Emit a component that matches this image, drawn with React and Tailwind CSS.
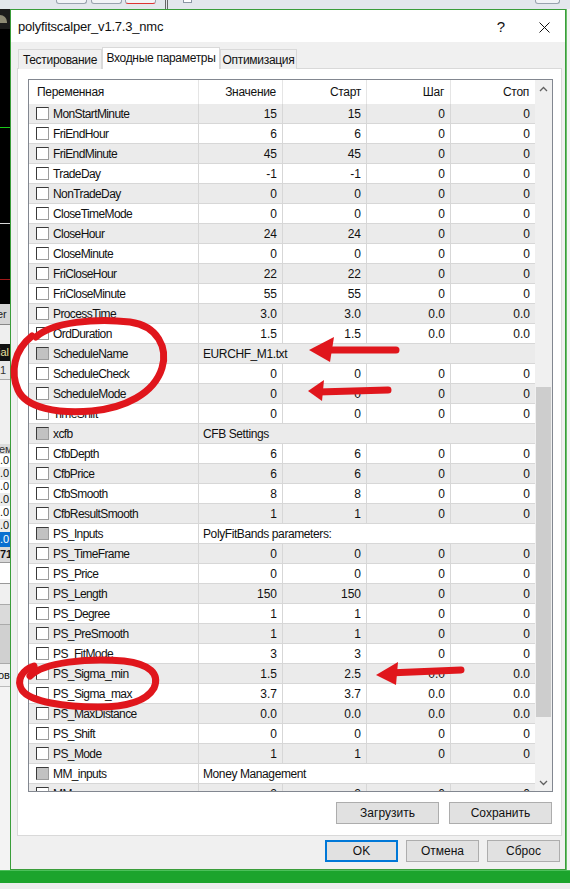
import React from "react";

const rows = [
	["MonStartMinute", "15", "15", "0", "0"],
	["FriEndHour", "6", "6", "0", "0"],
	["FriEndMinute", "45", "45", "0", "0"],
	["TradeDay", "-1", "-1", "0", "0"],
	["NonTradeDay", "0", "0", "0", "0"],
	["CloseTimeMode", "0", "0", "0", "0"],
	["CloseHour", "24", "24", "0", "0"],
	["CloseMinute", "0", "0", "0", "0"],
	["FriCloseHour", "22", "22", "0", "0"],
	["FriCloseMinute", "55", "55", "0", "0"],
	["ProcessTime", "3.0", "3.0", "0.0", "0.0"],
	["OrdDuration", "1.5", "1.5", "0.0", "0.0"],
	["ScheduleName", "EURCHF_M1.txt"],
	["ScheduleCheck", "0", "0", "0", "0"],
	["ScheduleMode", "0", "0", "0", "0"],
	["TimeShift", "0", "0", "0", "0"],
	["xcfb", "CFB Settings"],
	["CfbDepth", "6", "6", "0", "0"],
	["CfbPrice", "6", "6", "0", "0"],
	["CfbSmooth", "8", "8", "0", "0"],
	["CfbResultSmooth", "1", "1", "0", "0"],
	["PS_Inputs", "PolyFitBands parameters:"],
	["PS_TimeFrame", "0", "0", "0", "0"],
	["PS_Price", "0", "0", "0", "0"],
	["PS_Length", "150", "150", "0", "0"],
	["PS_Degree", "1", "1", "0", "0"],
	["PS_PreSmooth", "1", "1", "0", "0"],
	["PS_FitMode", "3", "3", "0", "0"],
	["PS_Sigma_min", "1.5", "2.5", "0.0", "0.0"],
	["PS_Sigma_max", "3.7", "3.7", "0.0", "0.0"],
	["PS_MaxDistance", "0.0", "0.0", "0.0", "0.0"],
	["PS_Shift", "0", "0", "0", "0"],
	["PS_Mode", "1", "1", "0", "0"],
	["MM_inputs", "Money Management"],
	["MM", "2", "2", "0", "0"],
];

const Check = ({ filled }) => (
	<span
		className={`block w-[13px] h-[13px] shrink-0 border border-t-[#3a3a3a] border-l-[#3a3a3a] border-r-[#9c9c9c] border-b-[#9c9c9c] ${filled ? "bg-[#c2c2c2]" : "bg-white"}`}
	/>
);

const Row = ({ r, i }) => {
	const bg = i % 2 === 0 ? "bg-[#ebebeb]" : "bg-white";
	const str = r.length === 2;
	return (
		<div className={`grid grid-cols-[170px_84px_84px_84px_84px] h-[20px] shrink-0 border-b border-[#d7d7d7] ${bg}`}>
			<div className="flex items-center pl-[7px] border-r border-[#d7d7d7]">
				<Check filled={str} />
				<span className="ml-[4px] tracking-[-0.6px] whitespace-nowrap">{r[0]}</span>
			</div>
			{str ? (
				<div className="col-span-4 flex items-center pl-[4px] tracking-[-0.4px] whitespace-nowrap">{r[1]}</div>
			) : (
				r.slice(1).map((v, k) => (
					<div
						key={k}
						className={`flex items-center justify-end pr-[5px] ${k < 3 ? "border-r border-[#d7d7d7]" : ""}`}
					>
						{v}
					</div>
				))
			)}
		</div>
	);
};

const Chevron = ({ down }) => (
	<svg width="9" height="6" viewBox="0 0 9 6">
		<polyline
			points={down ? "1,1 4.5,4.5 8,1" : "1,5 4.5,1.5 8,5"}
			fill="none"
			stroke="#606060"
			strokeWidth="1.3"
		/>
	</svg>
);

const Btn = ({ children, primary }) => (
	<div
		className={`h-[22px] flex items-center justify-center bg-[#e1e1e1] ${primary ? "w-[73px] border-2 border-[#0078d7]" : "border border-[#adadad]"}`}
	>
		{children}
	</div>
);

function LeftStrip() {
	return (
		<div className="w-[10px] flex flex-col overflow-hidden text-[11px] leading-none">
			<div className="h-[20px] bg-[#1c1c1c] flex items-center">
				<div className="w-[7px] h-[8px] bg-[#8d8a74] rounded-tr-full" />
			</div>
			<div className="h-[275px] bg-black flex flex-col">
				<div className="h-[98px]" />
				<div className="h-[1px] bg-[#19c819]" />
				<div className="h-[95px]" />
				<div className="h-[1px] bg-[#d8d8d8]" />
				<div className="h-[55px]" />
				<div className="h-[1px] bg-[#a01818]" />
			</div>
			<div className="h-[20px] bg-[#d6d6d6] flex items-center text-[#222] -ml-[3px]">er</div>
			<div className="h-[20px] bg-[#efefef] border-t border-[#888]" />
			<div className="h-[17px] bg-[#111] flex items-center text-[#e8e0a0] -ml-[2px]">ial</div>
			<div className="h-[18px] bg-[#e8e8e8] flex items-center text-[#333]">1</div>
			<div className="h-[65px] bg-[#f0f0f0] border-t border-[#aaa]" />
			<div className="h-[10px] bg-[#dcdcdc] flex items-center text-[#333] -ml-[1px]">ем</div>
			<div className="h-[13px] bg-white flex items-center">.0</div>
			<div className="h-[13px] bg-[#ececec] flex items-center">.0</div>
			<div className="h-[13px] bg-white flex items-center">.0</div>
			<div className="h-[13px] bg-[#ececec] flex items-center">.0</div>
			<div className="h-[13px] bg-white flex items-center">.0</div>
			<div className="h-[13px] bg-[#ececec] flex items-center">.0</div>
			<div className="h-[15px] bg-[#0a6fd0] flex items-center text-white">.0</div>
			<div className="h-[15px] bg-[#d8d8d8] flex items-center font-bold">71</div>
			<div className="h-[22px] bg-white border-y border-[#999]" />
			<div className="h-[20px] bg-[#f0f0f0]" />
			<div className="h-[20px] bg-[#dadada] border-t border-[#aaa]" />
			<div className="h-[40px] bg-[#d0d0d0] border-y border-[#aaa]" />
			<div className="h-[22px] bg-[#f0f0f0] flex items-center -ml-[2px]">ов</div>
			<div className="flex-1 bg-[#f3f3f3] border-t border-[#bbb]" />
		</div>
	);
}

function Annotations() {
	const red = "#e0161c";
	return (
		<svg className="absolute left-0 top-0 pointer-events-none" width="570" height="889" viewBox="0 0 570 889">
			<g fill="none" stroke={red} strokeWidth="7" strokeLinecap="round" strokeLinejoin="round">
				<path d="M36 337 C52 322 96 318 130 322 C158 326 168 348 162 368 C154 394 124 408 92 411 C58 414 26 408 18 390 C10 372 14 350 32 336" />
				<path d="M30 676 C44 662 88 658 124 661 C150 664 160 674 154 688 C146 702 124 707 98 707 C66 707 30 702 22 690 C16 680 22 670 34 666" />
				<path d="M396 350 L322 350" />
				<path d="M388 390 L318 392" />
				<path d="M461 670 L388 673" />
			</g>
			<g fill={red}>
				<path d="M309 350 L334 337 L330 362 Z" />
				<path d="M308 391 L324 380 L322 401 Z" />
				<path d="M376 675 L398 662 L396 685 Z" />
			</g>
		</svg>
	);
}

export default function App() {
	return (
		<div
			className="relative w-[570px] h-[889px] overflow-hidden flex flex-col bg-[#f0f0f0] text-[12px] text-[#111]"
			style={{ fontFamily: '"Liberation Sans", Arial, sans-serif' }}
		>
			{/* terminal toolbar behind the dialog */}
			<div className="h-[10px] bg-[#e3e7ec] flex items-start border-b border-[#555]">
				<div className="w-[56px]" />
				<div className="w-[31px] h-[4px] border border-t-0 border-[#98a2ad] rounded-b-[3px] bg-[#f2f4f6]" />
				<div className="w-[4px]" />
				<div className="w-[31px] h-[4px] border border-t-0 border-[#98a2ad] rounded-b-[3px] bg-[#f2f4f6]" />
				<div className="w-[3px]" />
				<div className="w-[31px] h-[4px] border border-t-0 border-[#98a2ad] border-b-[#d33] rounded-b-[3px] bg-[#f2f4f6]" />
				<div className="w-[9px]" />
				<div className="w-[3px] h-[10px] border-x border-[#666]" />
				<div className="w-[15px]" />
				<div className="w-[9px] h-[3px] border border-t-0 border-[#8a96a3] bg-white" />
				<div className="flex-1" />
				<div className="w-[25px] h-[4px] border border-t-0 border-[#98a2ad] rounded-b-[3px] bg-[#f2f4f6]" />
				<div className="w-[10px]" />
			</div>

			<div className="flex h-[861px] -mt-[1px]">
				<LeftStrip />

				{/* dialog */}
				<div className="w-[556px] h-[861px] border border-[#3a9d3a] bg-[#f0f0f0] flex flex-col">
					<div className="h-[32px] shrink-0 bg-white flex items-center pl-[7px] pr-[15px] pt-[2px]">
						<span className="text-[13px] tracking-[-0.2px]">polyfitscalper_v1.7.3_nmc</span>
						<span className="ml-auto text-[15px] mr-[34px]">?</span>
						<svg width="11" height="11" viewBox="0 0 11 11">
							<path d="M0.5 0.5 L10.5 10.5 M10.5 0.5 L0.5 10.5" stroke="#111" strokeWidth="1" />
						</svg>
					</div>

					<div className="flex flex-col pt-[5px] pl-[6px] pr-[3px]">
						{/* tabs */}
						<div className="flex items-end h-[22px] ml-[1px] relative z-10 tracking-[-0.3px]">
							<div className="h-[20px] w-[84px] border border-b-0 border-[#d9d9d9] bg-[#f0f0f0] flex items-center justify-center">
								Тестирование
							</div>
							<div className="h-[22px] w-[118px] border border-b-0 border-[#d9d9d9] bg-white flex items-center justify-center pb-[2px]">
								Входные параметры
							</div>
							<div className="h-[20px] w-[77px] border border-b-0 border-[#d9d9d9] bg-[#f0f0f0] flex items-center justify-center">
								Оптимизация
							</div>
						</div>

						{/* tab panel */}
						<div className="-mt-[1px] h-[768px] border border-[#d9d9d9] bg-white pt-[10px] pl-[10px] pr-[8px] flex flex-col">
							<div className="w-[525px] h-[713px] border border-[#828790] flex">
								<div className="w-[506px] flex flex-col overflow-hidden">
									<div className="grid grid-cols-[170px_84px_84px_84px_84px] h-[24px] shrink-0 bg-white tracking-[-0.3px]">
										<div className="flex items-center pl-[8px] border-r border-[#e5e5e5]">Переменная</div>
										<div className="flex items-center justify-end pr-[6px] border-r border-[#e5e5e5]">Значение</div>
										<div className="flex items-center justify-end pr-[5px] border-r border-[#e5e5e5]">Старт</div>
										<div className="flex items-center justify-end pr-[6px] border-r border-[#e5e5e5]">Шаг</div>
										<div className="flex items-center justify-end pr-[6px]">Стоп</div>
									</div>
									<div className="h-[687px] overflow-hidden flex flex-col">
										{rows.map((r, i) => (
											<Row key={r[0]} r={r} i={i} />
										))}
									</div>
								</div>
								{/* scrollbar */}
								<div className="w-[17px] bg-[#f0f0f0] flex flex-col">
									<div className="h-[17px] flex items-center justify-center">
										<Chevron />
									</div>
									<div className="h-[290px]" />
									<div className="h-[330px] mx-[1px] bg-[#cdcdcd]" />
									<div className="flex-1" />
									<div className="h-[17px] flex items-center justify-center">
										<Chevron down />
									</div>
								</div>
							</div>
							<div className="flex justify-end gap-[10px] mt-[10px] pr-[1px]">
								<div className="w-[103px]">
									<Btn>Загрузить</Btn>
								</div>
								<div className="w-[103px]">
									<Btn>Сохранить</Btn>
								</div>
							</div>
						</div>
					</div>

					<div className="flex justify-end gap-[8px] mt-[4px] pr-[5px]">
						<Btn primary>OK</Btn>
						<div className="w-[73px]">
							<Btn>Отмена</Btn>
						</div>
						<div className="w-[73px]">
							<Btn>Сброс</Btn>
						</div>
					</div>
				</div>

				<div className="flex-1 bg-[#f4f4f4] border-l border-[#6cbf6c]" />
			</div>

			<div className="h-[13px] bg-[#1ca42c] border-t border-[#4cc05a]" />
			<div className="flex-1 bg-[#ededed]" />

			<Annotations />
		</div>
	);
}
